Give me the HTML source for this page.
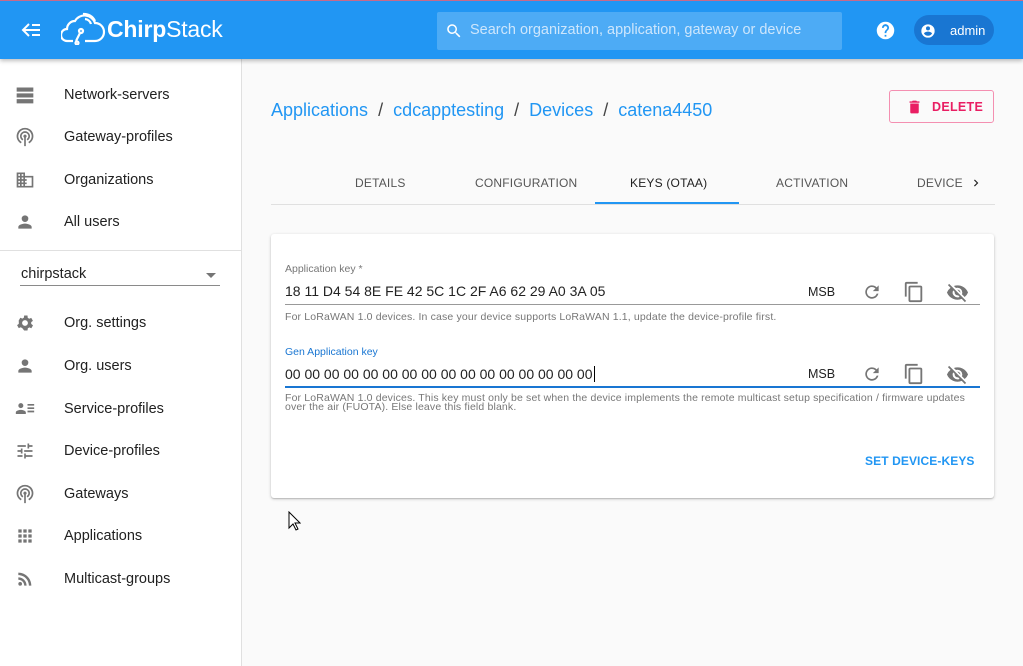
<!DOCTYPE html>
<html><head><style>
*{box-sizing:border-box;margin:0;padding:0}
body{width:1023px;height:666px;overflow:hidden;background:#fafafa;font-family:"Liberation Sans",sans-serif;position:relative}
.top{position:absolute;left:0;top:0;width:1023px;height:59px;background:#2196f3;border-top:1px solid #c86a8a;box-shadow:0 2px 4px rgba(0,0,0,.25);z-index:2}
.side{position:absolute;left:0;top:59px;width:242px;height:607px;background:#fff;border-right:1px solid #e0e0e0}
.item{position:absolute;left:0;height:20px;font-size:14.5px;color:#212121;display:flex;align-items:center}
.item svg{position:absolute;left:15px;width:20px;height:20px;fill:#757575}
.item span{position:absolute;left:64px;white-space:nowrap}
.abs{position:absolute}
.tab{position:absolute;top:176px;font-size:12px;color:#555;letter-spacing:.2px}
</style></head><body>
<div class="top">
 <svg class="abs" style="left:21px;top:20px" width="20" height="18" viewBox="0 0 20 18" fill="none" stroke="#fff" stroke-width="2"><path d="M8 3 L2 9 L8 15 M2 9 H19 M11 4 H19 M11 14 H19"/></svg>
 <svg class="abs" style="left:61px;top:10px" width="45" height="34" viewBox="0 0 45 34" fill="none" stroke="#fff" stroke-width="2.2"><path d="M12 30 H6 A6 6 0 0 1 6 18 A8 8 0 0 1 14 10 A11 11 0 0 1 34 12 A9 9 0 0 1 34 30 H24"/><path d="M22 3 A12 12 0 0 1 34 10 M24 8 A7 7 0 0 1 30 13"/><circle cx="20" cy="20" r="2"/><path d="M19 22 L15 30"/><circle cx="16" cy="32" r="1.5"/></svg>
 <div class="abs" style="left:107px;top:15px;color:#fff;font-size:23px;letter-spacing:-.2px"><span style="font-weight:bold">Chirp</span>Stack</div>
 <div class="abs" style="left:437px;top:11px;width:405px;height:38px;background:#4dabf5;border-radius:2px"></div>
 <svg class="abs" style="left:445px;top:21px" width="18" height="18" viewBox="0 0 24 24" fill="#fff"><path d="M15.5 14h-.8l-.3-.3A6.5 6.5 0 1 0 9.5 16a6.5 6.5 0 0 0 4.2-1.6l.3.3v.8l5 5 1.5-1.5-5-5zm-6 0A4.5 4.5 0 1 1 14 9.5 4.5 4.5 0 0 1 9.5 14z"/></svg>
 <div class="abs" style="left:470px;top:21px;color:#cde6fc;font-size:14.5px">Search organization, application, gateway or device</div>
 <svg class="abs" style="left:875px;top:19px" width="21" height="21" viewBox="0 0 24 24" fill="#fff"><path d="M12 2a10 10 0 1 0 0 20 10 10 0 0 0 0-20zm1 17h-2v-2h2v2zm2.1-7.7-.9.9c-.7.7-1.2 1.3-1.2 2.8h-2v-.5c0-1.1.4-2.1 1.2-2.8l1.2-1.3A2 2 0 1 0 10 9H8a4 4 0 1 1 7.1 2.3z"/></svg>
 <div class="abs" style="left:914px;top:14px;width:80px;height:30px;background:#1976d2;border-radius:15px"></div>
 <svg class="abs" style="left:920px;top:22px" width="16" height="16" viewBox="0 0 24 24" fill="#fff"><path d="M12 2a10 10 0 1 0 0 20 10 10 0 0 0 0-20zm0 3a3 3 0 1 1 0 6 3 3 0 0 1 0-6zm0 14.2a7.2 7.2 0 0 1-6-3.2c0-2 4-3.1 6-3.1s6 1.1 6 3.1a7.2 7.2 0 0 1-6 3.2z"/></svg>
 <div class="abs" style="left:950px;top:22px;color:#fff;font-size:13px">admin</div>
</div>
<div class="side">
 <div class="item" style="top:26px"><svg viewBox="0 0 24 24"><path d="M2 3h20v5H2zm0 7h20v5H2zm0 7h20v5H2z"/></svg><span>Network-servers</span></div>
 <div class="item" style="top:68px"><svg viewBox="0 0 24 24"><path d="M12 5a6 6 0 0 0-3 11.2l1-1.7a4 4 0 1 1 4 0l1 1.7A6 6 0 0 0 12 5zm0-4a10 10 0 0 0-5 18.7l1-1.7a8 8 0 1 1 8 0l1 1.7A10 10 0 0 0 12 1zm0 8a2 2 0 0 0-1 3.7V23h2V12.7A2 2 0 0 0 12 9z"/></svg><span>Gateway-profiles</span></div>
 <div class="item" style="top:111px"><svg viewBox="0 0 24 24"><path d="M12 7V3H2v18h20V7H12zM6 19H4v-2h2v2zm0-4H4v-2h2v2zm0-4H4V9h2v2zm0-4H4V5h2v2zm4 12H8v-2h2v2zm0-4H8v-2h2v2zm0-4H8V9h2v2zm0-4H8V5h2v2zm10 12h-8v-2h2v-2h-2v-2h2v-2h-2V9h8v10z"/></svg><span>Organizations</span></div>
 <div class="item" style="top:153px"><svg viewBox="0 0 24 24"><path d="M12 12a4 4 0 1 0 0-8 4 4 0 0 0 0 8zm0 2c-2.7 0-8 1.3-8 4v2h16v-2c0-2.7-5.3-4-8-4z"/></svg><span>All users</span></div>
 <div class="abs" style="left:0;top:191px;width:241px;height:1px;background:#e0e0e0"></div>
 <div class="abs" style="left:21px;top:207px;font-size:14.5px;color:#212121">chirpstack</div>
 <div class="abs" style="left:206px;top:214px;border:5px solid transparent;border-top-color:#757575"></div>
 <div class="abs" style="left:20px;top:226px;width:200px;height:1px;background:#8a8a8a"></div>
 <div class="item" style="top:254px"><svg viewBox="0 0 24 24"><path d="M19.4 13a7.5 7.5 0 0 0 0-2l2.1-1.6-2-3.5-2.5 1a7 7 0 0 0-1.7-1L15 3h-4l-.4 2.7a7 7 0 0 0-1.7 1l-2.5-1-2 3.5L4.6 11a7.5 7.5 0 0 0 0 2l-2.1 1.6 2 3.5 2.5-1a7 7 0 0 0 1.7 1L11 21h4l.4-2.7a7 7 0 0 0 1.7-1l2.5 1 2-3.5zM12 15.5a3.5 3.5 0 1 1 0-7 3.5 3.5 0 0 1 0 7z"/></svg><span>Org. settings</span></div>
 <div class="item" style="top:297px"><svg viewBox="0 0 24 24"><path d="M12 12a4 4 0 1 0 0-8 4 4 0 0 0 0 8zm0 2c-2.7 0-8 1.3-8 4v2h16v-2c0-2.7-5.3-4-8-4z"/></svg><span>Org. users</span></div>
 <div class="item" style="top:340px"><svg viewBox="0 0 24 24"><path d="M7 11a3 3 0 1 0 0-6 3 3 0 0 0 0 6zm0 2c-2 0-6 1-6 3v2h12v-2c0-2-4-3-6-3zm8-7h8v2h-8zm0 4h8v2h-8zm0 4h8v2h-8z"/></svg><span>Service-profiles</span></div>
 <div class="item" style="top:382px"><svg viewBox="0 0 24 24"><path d="M3 17v2h6v-2H3zM3 5v2h10V5H3zm10 16v-2h8v-2h-8v-2h-2v6h2zM7 9v2H3v2h4v2h2V9H7zm14 4v-2H11v2h10zm-6-4h2V7h4V5h-4V3h-2v6z"/></svg><span>Device-profiles</span></div>
 <div class="item" style="top:425px"><svg viewBox="0 0 24 24"><path d="M12 5a6 6 0 0 0-3 11.2l1-1.7a4 4 0 1 1 4 0l1 1.7A6 6 0 0 0 12 5zm0-4a10 10 0 0 0-5 18.7l1-1.7a8 8 0 1 1 8 0l1 1.7A10 10 0 0 0 12 1zm0 8a2 2 0 0 0-1 3.7V23h2V12.7A2 2 0 0 0 12 9z"/></svg><span>Gateways</span></div>
 <div class="item" style="top:467px"><svg viewBox="0 0 24 24"><path d="M4 8h4V4H4v4zm6 12h4v-4h-4v4zm-6 0h4v-4H4v4zm0-6h4v-4H4v4zm6 0h4v-4h-4v4zm6-10v4h4V4h-4zm-6 4h4V4h-4v4zm6 6h4v-4h-4v4zm0 6h4v-4h-4v4z"/></svg><span>Applications</span></div>
 <div class="item" style="top:510px"><svg viewBox="0 0 24 24"><circle cx="6.2" cy="17.8" r="2.2"/><path d="M4 4.4v2.9c7 0 12.7 5.7 12.7 12.7h2.9C19.6 11.4 12.6 4.4 4 4.4zm0 5.7v2.8c3.9 0 7.1 3.2 7.1 7.1h2.8c0-5.5-4.4-9.9-9.9-9.9z"/></svg><span>Multicast-groups</span></div>
</div>
<div class="abs" style="left:271px;top:100px;font-size:18px;color:#2196f3;white-space:nowrap">Applications <span style="color:#444">&nbsp;/&nbsp;</span> cdcapptesting <span style="color:#444">&nbsp;/&nbsp;</span> Devices <span style="color:#444">&nbsp;/&nbsp;</span> catena4450</div>
<div class="abs" style="left:889px;top:90px;width:105px;height:33px;border:1px solid #f48fb1;border-radius:3px"></div>
<svg class="abs" style="left:906px;top:98px" width="17" height="18" viewBox="0 0 24 24" fill="#e91e63"><path d="M6 19a2 2 0 0 0 2 2h8a2 2 0 0 0 2-2V7H6v12zM19 4h-3.5l-1-1h-5l-1 1H5v2h14V4z"/></svg>
<div class="abs" style="left:932px;top:100px;font-size:12.5px;color:#e91e63;letter-spacing:.3px;font-weight:bold">DELETE</div>
<div class="tab" style="left:355px">DETAILS</div>
<div class="tab" style="left:475px">CONFIGURATION</div>
<div class="tab" style="left:630px;color:#212121">KEYS (OTAA)</div>
<div class="tab" style="left:776px">ACTIVATION</div>
<div class="tab" style="left:917px">DEVICE</div>
<svg class="abs" style="left:969px;top:176px" width="14" height="14" viewBox="0 0 24 24" fill="#222"><path d="M8.6 16.6 13.2 12 8.6 7.4 10 6l6 6-6 6z"/></svg>
<div class="abs" style="left:271px;top:204px;width:724px;height:1px;background:#e0e0e0"></div>
<div class="abs" style="left:595px;top:202px;width:144px;height:2px;background:#2196f3"></div>
<div class="abs" style="left:271px;top:234px;width:723px;height:264px;background:#fff;border-radius:3px;box-shadow:0 1px 3px rgba(0,0,0,.2),0 1px 1px rgba(0,0,0,.14)"></div>
<div class="abs" style="left:285px;top:263px;font-size:10.5px;color:#777">Application key *</div>
<div class="abs" style="left:285px;top:283px;font-size:14px;color:#222">18 11 D4 54 8E FE 42 5C 1C 2F A6 62 29 A0 3A 05</div>
<div class="abs" style="left:285px;top:304px;width:695px;height:1px;background:#999"></div>
<div class="abs" style="left:285px;top:311px;font-size:10.5px;color:#777;letter-spacing:.15px">For LoRaWAN 1.0 devices. In case your device supports LoRaWAN 1.1, update the device-profile first.</div>
<div class="abs" style="left:285px;top:346px;font-size:10.5px;color:#1976d2">Gen Application key</div>
<div class="abs" style="left:285px;top:366px;font-size:14px;color:#222">00 00 00 00 00 00 00 00 00 00 00 00 00 00 00 00<span style="border-left:1px solid #000;margin-left:1px"></span></div>
<div class="abs" style="left:285px;top:386px;width:695px;height:2px;background:#1976d2"></div>
<div class="abs" style="left:285px;top:394px;width:695px;font-size:10.5px;color:#777;line-height:9px;letter-spacing:.15px">For LoRaWAN 1.0 devices. This key must only be set when the device implements the remote multicast setup specification / firmware updates over the air (FUOTA). Else leave this field blank.</div>
<div class="abs" style="left:808px;top:285px;font-size:12.5px;color:#222">MSB</div>
<div class="abs" style="left:808px;top:367px;font-size:12.5px;color:#222">MSB</div>
<svg class="abs" style="left:862px;top:282px" width="20" height="20" viewBox="0 0 24 24" fill="#757575"><path d="M17.6 6.4A8 8 0 1 0 19.7 14h-2.1a6 6 0 1 1-1.4-6.2L13 11h7V4l-2.4 2.4z"/></svg>
<svg class="abs" style="left:862px;top:364px" width="20" height="20" viewBox="0 0 24 24" fill="#757575"><path d="M17.6 6.4A8 8 0 1 0 19.7 14h-2.1a6 6 0 1 1-1.4-6.2L13 11h7V4l-2.4 2.4z"/></svg>
<svg class="abs" style="left:903px;top:281px" width="22" height="22" viewBox="0 0 24 24" fill="#757575"><path d="M16 1H4a2 2 0 0 0-2 2v14h2V3h12V1zm3 4H8a2 2 0 0 0-2 2v14a2 2 0 0 0 2 2h11a2 2 0 0 0 2-2V7a2 2 0 0 0-2-2zm0 16H8V7h11v14z"/></svg>
<svg class="abs" style="left:903px;top:363px" width="22" height="22" viewBox="0 0 24 24" fill="#757575"><path d="M16 1H4a2 2 0 0 0-2 2v14h2V3h12V1zm3 4H8a2 2 0 0 0-2 2v14a2 2 0 0 0 2 2h11a2 2 0 0 0 2-2V7a2 2 0 0 0-2-2zm0 16H8V7h11v14z"/></svg>
<svg class="abs" style="left:946px;top:281px" width="23" height="23" viewBox="0 0 24 24" fill="#757575"><path d="M12 7a5 5 0 0 1 5 5c0 .6-.1 1.3-.4 1.8l2.9 2.9A11.8 11.8 0 0 0 23 12a11.8 11.8 0 0 0-14.8-6.8l2.2 2.1C10.7 7.1 11.4 7 12 7zM2 4.3l2.3 2.3.5.4A11.8 11.8 0 0 0 1 12a11.8 11.8 0 0 0 15.4 6.7l.4.4 2.9 2.9 1.3-1.3L3.3 3 2 4.3zm5.5 5.5 1.6 1.6-.1.6a3 3 0 0 0 3 3l.6-.1 1.6 1.6A5 5 0 0 1 7.5 9.8zm4.3-.8 3.2 3.2V12a3 3 0 0 0-3-3h-.2z"/></svg>
<svg class="abs" style="left:946px;top:363px" width="23" height="23" viewBox="0 0 24 24" fill="#757575"><path d="M12 7a5 5 0 0 1 5 5c0 .6-.1 1.3-.4 1.8l2.9 2.9A11.8 11.8 0 0 0 23 12a11.8 11.8 0 0 0-14.8-6.8l2.2 2.1C10.7 7.1 11.4 7 12 7zM2 4.3l2.3 2.3.5.4A11.8 11.8 0 0 0 1 12a11.8 11.8 0 0 0 15.4 6.7l.4.4 2.9 2.9 1.3-1.3L3.3 3 2 4.3zm5.5 5.5 1.6 1.6-.1.6a3 3 0 0 0 3 3l.6-.1 1.6 1.6A5 5 0 0 1 7.5 9.8zm4.3-.8 3.2 3.2V12a3 3 0 0 0-3-3h-.2z"/></svg>
<div class="abs" style="left:865px;top:454px;font-size:12px;color:#2196f3;font-weight:bold;letter-spacing:.1px">SET DEVICE-KEYS</div>
<svg class="abs" style="left:288px;top:511px" width="13" height="20" viewBox="0 0 13 20"><path d="M1 1v16l4-4 3 6 2-1-3-6h5z" fill="#fff" stroke="#000"/></svg>
</body></html>
